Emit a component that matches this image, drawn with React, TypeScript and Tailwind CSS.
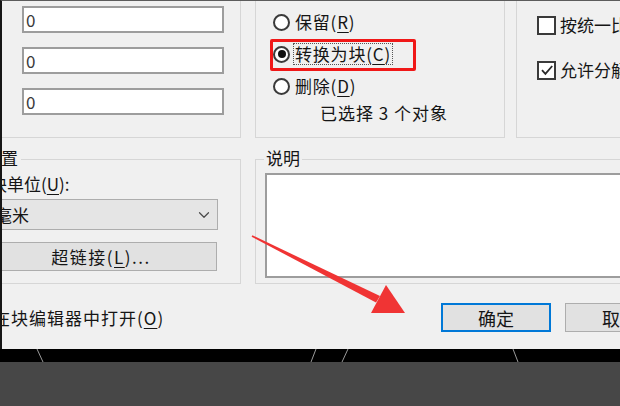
import { ChevronDown } from 'lucide-react';

const Mn: React.FC<{ k: string }> = ({ k }) => (
  <span className="underline underline-offset-[3px] decoration-1">{k}</span>
);

const Radio: React.FC<{ checked?: boolean }> = ({ checked }) => (
  <span className="flex h-[17px] w-[17px] shrink-0 items-center justify-center rounded-full border-2 border-[#3a3a3a] bg-white">
    {checked && <span className="h-[8px] w-[8px] rounded-full bg-[#111]" />}
  </span>
);

const Check: React.FC<{ checked?: boolean }> = ({ checked }) => (
  <span className="flex h-[19px] w-[19px] shrink-0 items-center justify-center border-2 border-[#3a3a3a] bg-white">
    {checked && (
      <svg viewBox="0 0 14 14" className="h-[14px] w-[14px]">
        <path d="M2 7.2l3.4 3.6L12.2 3" stroke="#2a2a2a" strokeWidth="1.8" fill="none" />
      </svg>
    )}
  </span>
);

const CoordInput: React.FC = () => (
  <div className="ml-[42px] flex h-[27px] w-[202px] items-center border-2 border-[#9d9d9d] bg-white pl-[2px] text-[#3a3a3a]">0</div>
);

export default function App() {
  return (
    <div className="relative flex h-[406px] w-[620px] flex-col overflow-hidden bg-[#474747] font-['Noto_Sans_CJK_SC','Noto_Sans',sans-serif] text-[17px] leading-[20px] text-[#151515]">
      {/* dialog */}
      <div className="h-[349px] shrink-0 overflow-hidden border-l-2 border-t border-l-[#161616] border-t-[#5c5c5c] bg-[#f0f0f0]">
        <div className="ml-[-62px] mt-[-21px] flex w-[820px] flex-col">
          {/* top row */}
          <div className="flex">
            <div className="flex h-[158px] w-[301px] shrink-0 flex-col gap-[14px] border border-[#d6d6d6] pl-[39px] pt-[25px]">
              <CoordInput />
              <CoordInput />
              <CoordInput />
            </div>

            <div className="ml-[14px] flex h-[158px] w-[250px] shrink-0 flex-col border border-[#d6d6d6] pl-[17px] pt-[25px] tracking-[0.8px]">
              <div className="flex h-[32px] items-center gap-[5px]">
                <Radio />
                <span>保留(<Mn k="R" />)</span>
              </div>
              <div className="flex h-[32px] items-center gap-[3px]">
                <Radio checked />
                <span className="border border-dotted border-[#555] px-[1px]">转换为块(<Mn k="C" />)</span>
              </div>
              <div className="flex h-[32px] items-center gap-[5px]">
                <Radio />
                <span>删除(<Mn k="D" />)</span>
              </div>
              <div className="flex h-[22px] items-center whitespace-pre pl-[47px] tracking-[1px]">已选择 3 个对象</div>
            </div>

            <div className="ml-[11px] flex h-[158px] w-[240px] shrink-0 flex-col gap-[21px] border border-[#d6d6d6] pl-[20px] pt-[32px]">
              <div className="flex h-[24px] items-center gap-[4px]">
                <Check />
                <span className="whitespace-nowrap">按统一比例缩放(<Mn k="S" />)</span>
              </div>
              <div className="flex h-[24px] items-center gap-[4px]">
                <Check checked />
                <span className="whitespace-nowrap">允许分解(<Mn k="P" />)</span>
              </div>
            </div>
          </div>

          {/* bottom groups */}
          <div className="mt-[21px] flex">
            <div className="relative flex h-[125px] w-[301px] shrink-0 flex-col border border-[#d6d6d6] pl-[44px] pt-[14px]">
              <span className="absolute left-[40px] top-[-12px] bg-[#f0f0f0] px-[3px]">设置</span>
              <div className="h-[20px] pl-[5px]">块单位(<Mn k="U" />):</div>
              <div className="mt-[5px] flex h-[31px] w-[233px] items-center justify-between border border-[#adadad] bg-[#e5e5e5] pl-[9px] pr-[4px]">
                <span>毫米</span>
                <ChevronDown className="h-[18px] w-[18px] text-[#4a4a4a]" strokeWidth={1.6} />
              </div>
              <div className="mt-[12px] flex h-[29px] w-[232px] items-center justify-center border border-[#adadad] bg-[#e1e1e1] tracking-[1.5px]">
                超链接(<Mn k="L" />)...
              </div>
            </div>

            <div className="relative ml-[14px] flex h-[125px] w-[460px] shrink-0 flex-col border border-[#d6d6d6] pl-[9px] pt-[13px]">
              <span className="absolute left-[8px] top-[-12px] bg-[#f0f0f0] px-[2px]">说明</span>
              <div className="h-[105px] w-[440px] border-2 border-[#9d9d9d] bg-white" />
            </div>
          </div>

          {/* bottom buttons */}
          <div className="mt-[19px] flex h-[29px] items-center">
            <div className="flex w-[501px] shrink-0 items-center gap-[6px] pl-[28px]">
              <Check />
              <span className="whitespace-nowrap tracking-[1px]">在块编辑器中打开(<Mn k="O" />)</span>
            </div>
            <div className="flex h-[29px] w-[110px] shrink-0 items-center justify-center border-2 border-[#0078d7] bg-[#e1e1e1] text-[18px]">
              确定
            </div>
            <div className="ml-[14px] flex h-[29px] w-[110px] shrink-0 items-center justify-center border border-[#adadad] bg-[#e1e1e1] text-[18px]">
              取消
            </div>
          </div>
        </div>
      </div>

      {/* black band with drawing lines */}
      <div className="h-[13px] shrink-0 bg-black">
        <svg width="620" height="13" className="block">
          <g stroke="#9a9a9a" strokeWidth="1" fill="none">
            <line x1="37" y1="0" x2="43" y2="13" />
            <line x1="316" y1="0" x2="311" y2="13" />
            <line x1="348" y1="0" x2="342" y2="13" />
            <line x1="513" y1="0" x2="518" y2="13" />
          </g>
        </svg>
      </div>
      <div className="flex-1 bg-[#474747]" />

      {/* annotation: red box */}
      <div className="pointer-events-none absolute left-[270px] top-[39px] h-[32px] w-[146px] rounded-[2px] border-[3px] border-[#f01818]" />

      {/* annotation: red arrow */}
      <svg width="620" height="406" className="pointer-events-none absolute left-0 top-0">
        <polygon points="251.6,236.7 252.4,235.3 380,296 376,302.5" fill="#f03434" />
        <polygon points="405,313 371,313 386,285" fill="#f03434" />
      </svg>
    </div>
  );
}
